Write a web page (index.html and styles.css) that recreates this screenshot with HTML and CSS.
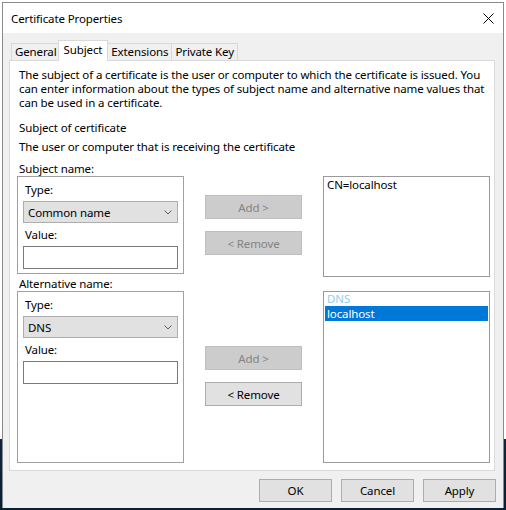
FILE: index.html
```html
<!DOCTYPE html>
<html lang="en">
<head>
  <meta charset="UTF-8">
  <title>Certificate Properties</title>
  <link rel="stylesheet" href="styles.css">
</head>
<body>
  <div class="window">
    <div class="titlebar">
      <span class="title">Certificate Properties</span>
      <svg class="close" width="11" height="11" viewBox="0 0 11 11">
        <path d="M0.5 0.5 L10.5 10.5 M10.5 0.5 L0.5 10.5" stroke="#000" stroke-width="1" fill="none"/>
      </svg>
    </div>

    <div class="content">
      <div class="tabs">
        <div class="tab">General</div>
        <div class="tab active">Subject</div>
        <div class="tab">Extensions</div>
        <div class="tab">Private Key</div>
      </div>

      <div class="panel">
        <p class="intro">The subject of a certificate is the user or computer to which the certificate is issued. You<br>can enter information about the types of subject name and alternative name values that<br>can be used in a certificate.</p>
        <div class="line heading">Subject of certificate</div>
        <div class="line note">The user or computer that is receiving the certificate</div>

        <div class="line group-title">Subject name:</div>
        <div class="name-row">
          <div class="group">
            <div class="field-label">Type:</div>
            <div class="combo">
              <span>Common name</span>
              <svg class="chevron" width="8" height="5" viewBox="0 0 8 5"><path d="M0.5 0.5 L4 4 L7.5 0.5" stroke="#606060" fill="none"/></svg>
            </div>
            <div class="field-label">Value:</div>
            <div class="textbox"></div>
          </div>
          <div class="move-buttons subject-buttons">
            <button class="btn disabled">Add &gt;</button>
            <button class="btn disabled">&lt; Remove</button>
          </div>
          <div class="listbox subject-list">
            <div class="item">CN=localhost</div>
          </div>
        </div>

        <div class="line">Alternative name:</div>
        <div class="name-row alt-row">
          <div class="group">
            <div class="field-label">Type:</div>
            <div class="combo">
              <span>DNS</span>
              <svg class="chevron" width="8" height="5" viewBox="0 0 8 5"><path d="M0.5 0.5 L4 4 L7.5 0.5" stroke="#606060" fill="none"/></svg>
            </div>
            <div class="field-label">Value:</div>
            <div class="textbox"></div>
          </div>
          <div class="move-buttons alt-buttons">
            <button class="btn disabled">Add &gt;</button>
            <button class="btn">&lt; Remove</button>
          </div>
          <div class="listbox">
            <div class="item item-group">DNS</div>
            <div class="item selected">localhost</div>
          </div>
        </div>
      </div>

      <div class="footer">
        <button class="btn dialog-btn">OK</button>
        <button class="btn dialog-btn">Cancel</button>
        <button class="btn dialog-btn">Apply</button>
      </div>
    </div>
  </div>
</body>
</html>
```

FILE: styles.css
```css
html, body {
  margin: 0;
  padding: 0;
}

body {
  width: 506px;
  height: 510px;
  overflow: hidden;
  background: linear-gradient(to bottom, #ffffff 0, #ffffff 86%, #0c2541 86%, #0a1f38 100%);
  font-family: "Noto Sans", "Open Sans", sans-serif;
  font-size: 11.5px;
  letter-spacing: -0.12px;
  color: #000;
}

.window {
  box-sizing: border-box;
  width: 502px;
  height: 506px;
  margin: 2px 0 0 2px;
  border: 1px solid #8a8a8a;
  border-bottom: none;
  background: #f0f0f0;
  display: flex;
  flex-direction: column;
}

.titlebar {
  height: 30px;
  background: #fff;
  display: flex;
  align-items: center;
  justify-content: space-between;
  padding: 0 9px 0 8px;
  flex-shrink: 0;
}

.title {
  line-height: 15px;
}

.close {
  display: block;
}

.content {
  flex: 1;
  padding: 7px 8px 0 6px;
}

/* tabs */

.tabs {
  display: flex;
  align-items: flex-end;
  height: 20px;
  padding-left: 2px;
}

.tab {
  box-sizing: border-box;
  height: 17px;
  line-height: 16px;
  padding: 0 3px;
  border: 1px solid #d9d9d9;
  border-bottom: none;
  margin-right: -1px;
  background: #f0f0f0;
}

.tab.active {
  position: relative;
  z-index: 1;
  height: 21px;
  line-height: 18px;
  margin: 0 -1px -1px -2px;
  padding: 0 5px;
  background: #fff;
}

.panel {
  box-sizing: border-box;
  width: 486px;
  height: 411px;
  background: #fff;
  border: 1px solid #d9d9d9;
  padding: 7px 7px 0 7px;
}

.intro {
  margin: 0;
  padding-left: 2px;
  line-height: 14px;
  white-space: nowrap;
}

.line {
  padding-left: 2px;
  line-height: 15px;
  white-space: nowrap;
}

.heading {
  margin-top: 10px;
}

.note {
  margin-top: 4px;
}

.group-title {
  margin-top: 7px;
}

/* subject / alternative name rows */

.name-row {
  display: grid;
  grid-template-columns: 167px 97px 167px;
  column-gap: 21px;
  align-items: start;
  height: 100px;
}

.alt-row {
  height: 172px;
  align-items: stretch;
}

.group {
  box-sizing: border-box;
  border: 1px solid #a0a0a0;
  padding: 5px 5px 4px 5px;
}

.field-label {
  padding-left: 2px;
  line-height: 15px;
}

.combo {
  box-sizing: border-box;
  height: 22px;
  margin: 4px 0;
  background: #e1e1e1;
  border: 1px solid #adadad;
  display: flex;
  align-items: center;
  justify-content: space-between;
  padding: 0 5px 0 4px;
}

.chevron {
  display: block;
}

.textbox {
  box-sizing: border-box;
  height: 23px;
  margin-top: 4px;
  background: #fff;
  border: 1px solid #7a7a7a;
}

.move-buttons {
  display: flex;
  flex-direction: column;
  gap: 12px;
}

.subject-buttons {
  padding-top: 19px;
}

.alt-buttons {
  padding-top: 55px;
}

.btn {
  box-sizing: border-box;
  height: 24px;
  margin: 0;
  padding: 0;
  font-family: inherit;
  font-size: 11.5px;
  letter-spacing: -0.12px;
  color: #000;
  background: #e1e1e1;
  border: 1px solid #adadad;
}

.btn.disabled {
  background: #cccccc;
  border-color: #bfbfbf;
  color: #838383;
}

.listbox {
  box-sizing: border-box;
  background: #fff;
  border: 1px solid #9a9a9a;
  padding: 0 1px;
}

.subject-list {
  height: 101px;
}

.item {
  height: 15px;
  line-height: 15px;
  padding-left: 2px;
}

.item-group {
  height: 14px;
  line-height: 14px;
  color: #8fd0ee;
}

.selected {
  background: #0078d7;
  color: #fff;
}

/* dialog buttons */

.footer {
  display: flex;
  justify-content: flex-end;
  gap: 9px;
  margin: 8px -1px 0 0;
}

.dialog-btn {
  width: 73px;
  height: 23px;
}
```
